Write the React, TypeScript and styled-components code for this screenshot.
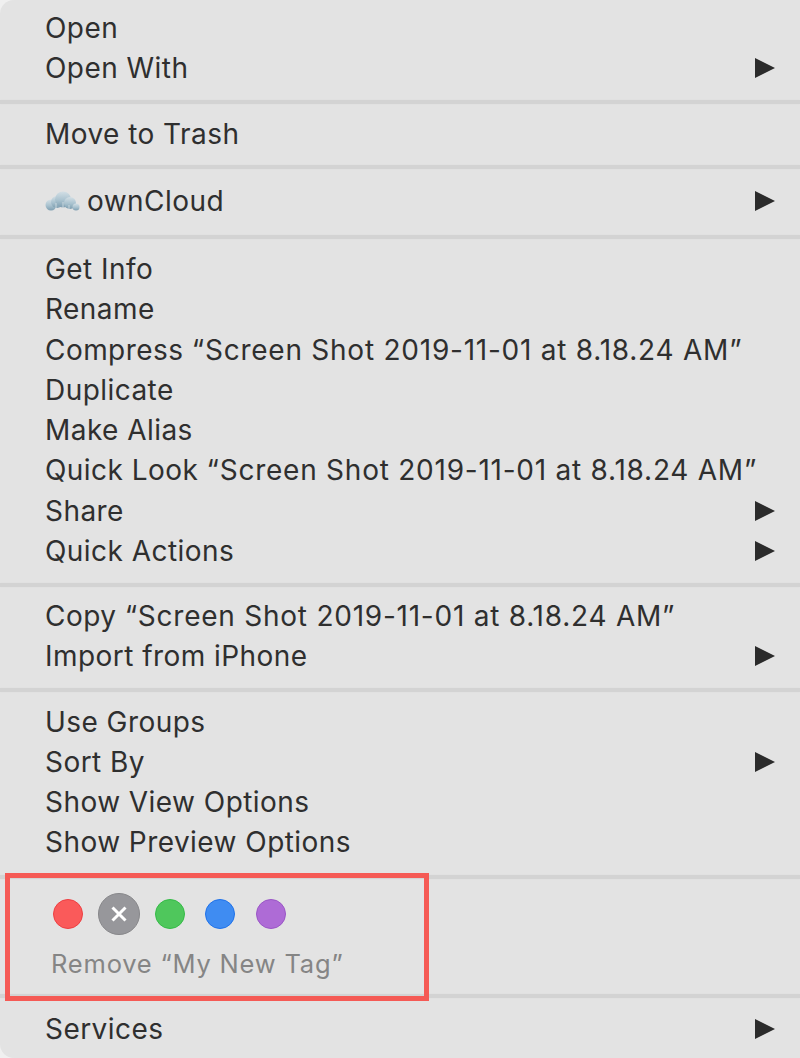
import { ReactElement } from "react";
import styled, { createGlobalStyle } from "styled-components";

const GlobalStyle = createGlobalStyle`
  html, body {
    background: #f0f0f0;
    height: 100%;
    margin: 0;
  }
`;

const Menu = styled.div`
  background-color: #e3e3e3;
  border-radius: 14px 0 0 14px;
  box-sizing: border-box;
  color: #2f2f2f;
  font-family: Inter, "Liberation Sans", sans-serif;
  font-size: 28px;
  height: 1058px;
  letter-spacing: 0.45px;
  overflow: hidden;
  padding-top: 8px;
  position: relative;
  width: 800px;
`;

const Separator = styled.div<{ $before: number; $after: number }>`
  background-color: #d3d3d3;
  box-shadow: 0 0 1px #d8d8d8;
  height: 4px;
  margin-bottom: ${props => props.$after}px;
  margin-top: ${props => props.$before}px;
`;

const Row = styled.div`
  align-items: center;
  display: flex;
  height: 40.25px;
  justify-content: space-between;
  padding: 0 25px 0 45px;
`;

const Label = styled.span`
  white-space: nowrap;
`;

const FileName = styled.span`
  letter-spacing: 0.76px;
`;

const LabelWithIcon = styled.span`
  align-items: center;
  display: flex;
  gap: 7px;
`;

const Arrow = styled.span`
  border-bottom: 10.5px solid transparent;
  border-left: 20px solid #2b2b2b;
  border-top: 10.5px solid transparent;
  height: 0;
  width: 0;
`;

const TagRow = styled.div`
  align-items: center;
  display: flex;
  gap: 20.75px;
  height: 44px;
  padding-left: 53px;
`;

const TagDot = styled.span<{ $fill: string; $edge: string }>`
  background-color: ${props => props.$fill};
  border: 1px solid ${props => props.$edge};
  border-radius: 50%;
  box-sizing: border-box;
  height: 30px;
  width: 30px;
`;

const RemoveDot = styled.span`
  align-items: center;
  background-color: #97979b;
  border: 1px solid #87878a;
  border-radius: 50%;
  box-sizing: border-box;
  display: flex;
  height: 42px;
  justify-content: center;
  margin: 0 -6px;
  width: 42px;
`;

const RemoveLabel = styled.div`
  color: #858585;
  font-size: 25.5px;
  height: 40px;
  letter-spacing: 0.8px;
  line-height: 40px;
  margin-top: 8px;
  padding-left: 51px;
`;

const Highlight = styled.div`
  border: 5px solid #f55a55;
  box-sizing: border-box;
  height: 128px;
  left: 5px;
  position: absolute;
  top: 873px;
  width: 424px;
`;

function CloudIcon(): ReactElement {
  return (
    <svg width="35" height="20" viewBox="0 0 35 20">
      <defs>
        <linearGradient id="cloudFill" x1="0" y1="0" x2="0" y2="1">
          <stop offset="0" stopColor="#d3dfe5" />
          <stop offset="0.55" stopColor="#a9c2cf" />
          <stop offset="1" stopColor="#7f9fb1" />
        </linearGradient>
      </defs>
      <g fill="url(#cloudFill)">
        <circle cx="6" cy="14" r="5.5" />
        <circle cx="12" cy="11" r="6" />
        <circle cx="18" cy="8.5" r="8" />
        <circle cx="25" cy="12" r="6" />
        <circle cx="31" cy="16" r="3.5" />
      </g>
      <path d="M11 19V12M18 19V11M24 19v-5" stroke="#dce6ea" strokeWidth="1.2" opacity="0.6" />
    </svg>
  );
}

function CloseMark(): ReactElement {
  return (
    <svg width="18" height="18" viewBox="0 0 18 18">
      <path d="M2.5 2.5 15.5 15.5M15.5 2.5 2.5 15.5" stroke="#ffffff" strokeWidth="3" />
    </svg>
  );
}

function Item({ label, submenu }: { label: string; submenu?: boolean }): ReactElement {
  return (
    <Row>
      <Label>{label}</Label>
      {submenu && <Arrow />}
    </Row>
  );
}

function FileItem({ action }: { action: string }): ReactElement {
  return (
    <Row>
      <Label>
        {action} <FileName>“Screen Shot 2019-11-01 at 8.18.24 AM”</FileName>
      </Label>
    </Row>
  );
}

function App(): ReactElement {
  return (
    <>
      <GlobalStyle />
      <Menu>
        <Item label="Open" />
        <Item label="Open With" submenu />
        <Separator $before={11} $after={10} />
        <Item label="Move to Trash" />
        <Separator $before={11} $after={12} />
        <Row>
          <LabelWithIcon>
            <CloudIcon />
            <Label>ownCloud</Label>
          </LabelWithIcon>
          <Arrow />
        </Row>
        <Separator $before={14} $after={10} />
        <Item label="Get Info" />
        <Item label="Rename" />
        <FileItem action="Compress" />
        <Item label="Duplicate" />
        <Item label="Make Alias" />
        <FileItem action="Quick Look" />
        <Item label="Share" submenu />
        <Item label="Quick Actions" submenu />
        <Separator $before={12} $after={9} />
        <FileItem action="Copy" />
        <Item label="Import from iPhone" submenu />
        <Separator $before={11} $after={10} />
        <Item label="Use Groups" />
        <Item label="Sort By" submenu />
        <Item label="Show View Options" />
        <Item label="Show Preview Options" />
        <Separator $before={12} $after={13} />
        <TagRow>
          <TagDot $fill="#fa5a5a" $edge="#ee3f42" />
          <RemoveDot>
            <CloseMark />
          </RemoveDot>
          <TagDot $fill="#4fc75c" $edge="#35bb47" />
          <TagDot $fill="#3f8cf2" $edge="#1f72ea" />
          <TagDot $fill="#ae6bd6" $edge="#9a56c6" />
        </TagRow>
        <RemoveLabel>Remove “My New Tag”</RemoveLabel>
        <Separator $before={10} $after={11} />
        <Item label="Services" submenu />
        <Highlight />
      </Menu>
    </>
  );
}

export default App;
